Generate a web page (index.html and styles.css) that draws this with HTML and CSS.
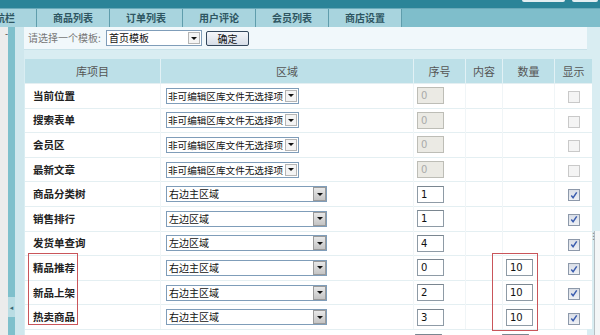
FILE: index.html
```html
<!DOCTYPE html>
<html lang="zh-CN">
<head>
  <meta charset="UTF-8" />
  <title>模板设置</title>
  <link rel="stylesheet" href="styles.css">
</head>
<body>
  <div class="topbar">
    <span class="topbtn wide"></span>
    <span class="topbtn"></span>
  </div>
  <div class="tabbar">
    <div class="tab first">导航栏</div>
    <div class="tab">商品列表</div>
    <div class="tab">订单列表</div>
    <div class="tab">用户评论</div>
    <div class="tab">会员列表</div>
    <div class="tab">商店设置</div>
  </div>
  <div class="main">
    <div class="side-gray"><span class="side-dot">-</span></div>
    <div class="side-bar"><span class="side-handle">◂</span></div>
    <div class="side-gap"></div>
    <div class="content">
      <div class="picker">
        <span class="picker-label">请选择一个模板:</span>
        <div class="sel sel-tpl"><span class="sel-text">首页模板</span><span class="sel-arrow"></span></div>
        <button class="btn">确定</button>
      </div>
      <div class="grid-wrap">
        <table class="lib">
          <thead>
            <tr>
              <th class="c-name">库项目</th>
              <th class="c-area">区域</th>
              <th class="c-seq">序号</th>
              <th class="c-body">内容</th>
              <th class="c-num">数量</th>
              <th class="c-show">显示</th>
            </tr>
          </thead>
          <tbody>
            <tr>
              <td class="c-name">当前位置</td>
              <td class="c-area"><div class="sel sel-fixed"><span class="sel-text">非可编辑区库文件无选择项</span><span class="sel-arrow"></span></div></td>
              <td class="c-seq"><input class="num" type="text" value="0" disabled></td>
              <td></td><td></td>
              <td class="c-show"><span class="check off"></span></td>
            </tr>
            <tr>
              <td class="c-name">搜索表单</td>
              <td class="c-area"><div class="sel sel-fixed"><span class="sel-text">非可编辑区库文件无选择项</span><span class="sel-arrow"></span></div></td>
              <td class="c-seq"><input class="num" type="text" value="0" disabled></td>
              <td></td><td></td>
              <td class="c-show"><span class="check off"></span></td>
            </tr>
            <tr>
              <td class="c-name">会员区</td>
              <td class="c-area"><div class="sel sel-fixed"><span class="sel-text">非可编辑区库文件无选择项</span><span class="sel-arrow"></span></div></td>
              <td class="c-seq"><input class="num" type="text" value="0" disabled></td>
              <td></td><td></td>
              <td class="c-show"><span class="check off"></span></td>
            </tr>
            <tr>
              <td class="c-name">最新文章</td>
              <td class="c-area"><div class="sel sel-fixed"><span class="sel-text">非可编辑区库文件无选择项</span><span class="sel-arrow"></span></div></td>
              <td class="c-seq"><input class="num" type="text" value="0" disabled></td>
              <td></td><td></td>
              <td class="c-show"><span class="check off"></span></td>
            </tr>
            <tr>
              <td class="c-name">商品分类树</td>
              <td class="c-area"><div class="sel sel-area"><span class="sel-text">右边主区域</span><span class="sel-arrow big"></span></div></td>
              <td class="c-seq"><input class="num" type="text" value="1"></td>
              <td></td><td></td>
              <td class="c-show"><span class="check on"><svg viewBox="0 0 11 11" width="11" height="11"><path d="M2.5 5.5 L4.5 8 L8.5 2" fill="none" stroke="#3a5cae" stroke-width="1.6"/></svg></span></td>
            </tr>
            <tr>
              <td class="c-name">销售排行</td>
              <td class="c-area"><div class="sel sel-area"><span class="sel-text">左边区域</span><span class="sel-arrow big"></span></div></td>
              <td class="c-seq"><input class="num" type="text" value="1"></td>
              <td></td><td></td>
              <td class="c-show"><span class="check on"><svg viewBox="0 0 11 11" width="11" height="11"><path d="M2.5 5.5 L4.5 8 L8.5 2" fill="none" stroke="#3a5cae" stroke-width="1.6"/></svg></span></td>
            </tr>
            <tr>
              <td class="c-name">发货单查询</td>
              <td class="c-area"><div class="sel sel-area"><span class="sel-text">左边区域</span><span class="sel-arrow big"></span></div></td>
              <td class="c-seq"><input class="num" type="text" value="4"></td>
              <td></td><td></td>
              <td class="c-show"><span class="check on"><svg viewBox="0 0 11 11" width="11" height="11"><path d="M2.5 5.5 L4.5 8 L8.5 2" fill="none" stroke="#3a5cae" stroke-width="1.6"/></svg></span></td>
            </tr>
            <tr>
              <td class="c-name">精品推荐</td>
              <td class="c-area"><div class="sel sel-area"><span class="sel-text">右边主区域</span><span class="sel-arrow big"></span></div></td>
              <td class="c-seq"><input class="num" type="text" value="0"></td>
              <td></td>
              <td class="c-num"><input class="num" type="text" value="10"></td>
              <td class="c-show"><span class="check on"><svg viewBox="0 0 11 11" width="11" height="11"><path d="M2.5 5.5 L4.5 8 L8.5 2" fill="none" stroke="#3a5cae" stroke-width="1.6"/></svg></span></td>
            </tr>
            <tr>
              <td class="c-name">新品上架</td>
              <td class="c-area"><div class="sel sel-area"><span class="sel-text">右边主区域</span><span class="sel-arrow big"></span></div></td>
              <td class="c-seq"><input class="num" type="text" value="2"></td>
              <td></td>
              <td class="c-num"><input class="num" type="text" value="10"></td>
              <td class="c-show"><span class="check on"><svg viewBox="0 0 11 11" width="11" height="11"><path d="M2.5 5.5 L4.5 8 L8.5 2" fill="none" stroke="#3a5cae" stroke-width="1.6"/></svg></span></td>
            </tr>
            <tr>
              <td class="c-name">热卖商品</td>
              <td class="c-area"><div class="sel sel-area"><span class="sel-text">右边主区域</span><span class="sel-arrow big"></span></div></td>
              <td class="c-seq"><input class="num" type="text" value="3"></td>
              <td></td>
              <td class="c-num"><input class="num" type="text" value="10"></td>
              <td class="c-show"><span class="check on"><svg viewBox="0 0 11 11" width="11" height="11"><path d="M2.5 5.5 L4.5 8 L8.5 2" fill="none" stroke="#3a5cae" stroke-width="1.6"/></svg></span></td>
            </tr>
          </tbody>
        </table>
        <div class="table-tail">
          <span class="tail-name"></span>
          <span class="tail-seq"><input class="num" type="text" value="5"></span>
          <span class="tail-num"><input class="num" type="text" value="10"></span>
        </div>
        <div class="mark mark-name"></div>
        <div class="mark mark-count"></div>
      </div>
    </div>
    <div class="side-right"><div class="frame-edge"><span class="grip">⋮</span></div></div>
  </div>
</body>
</html>
```

FILE: styles.css
```css
body {
  margin: 0;
  width: 600px;
  height: 335px;
  overflow: hidden;
  font-family: "Noto Sans CJK SC", "DejaVu Sans", sans-serif;
  font-size: 10px;
  color: #222;
  background-color: #d9edf2;
}

.topbar {
  height: 8px;
  background-color: #2b8498;
  display: flex;
  justify-content: flex-end;
  gap: 7px;
  padding-right: 2px;
}

.topbtn {
  width: 26px;
  height: 2px;
  background-color: #e4eef1;
  border-radius: 0 0 2px 2px;
}

.topbtn.wide {
  width: 43px;
}

.tabbar {
  height: 19px;
  display: flex;
  background-color: #7fbecb;
  border-top: 1px solid #6aaab9;
  box-sizing: border-box;
}

.tab {
  width: 72px;
  flex-shrink: 0;
  border-right: 1px solid #5f9dac;
  background-color: #a8d4de;
  color: #2e5662;
  font-weight: bold;
  text-align: center;
  line-height: 18px;
  font-size: 10px;
}

.tab.first {
  margin-left: -36px;
}

.main {
  display: flex;
  height: 308px;
  overflow: hidden;
}

.side-gray {
  width: 8px;
  background-color: #ececec;
}

.side-dot {
  display: block;
  margin-top: 3px;
  font-size: 9px;
  line-height: 8px;
  color: #333;
  text-align: right;
}

.side-bar {
  width: 7px;
  background-color: #7ec0cc;
  padding-top: 270px;
  box-sizing: border-box;
}

.side-handle {
  display: block;
  height: 20px;
  background-color: #b9dde4;
  color: #3d6a75;
  font-size: 7px;
  line-height: 20px;
  text-align: center;
}

.side-gap {
  width: 9px;
  background-color: #cfe7ed;
}

.content {
  width: 563px;
  display: flex;
  flex-direction: column;
}

.picker {
  height: 23px;
  flex-shrink: 0;
  background-color: #f1f8fb;
  border-bottom: 1px solid #c9e2e9;
  box-sizing: border-box;
  display: flex;
  align-items: center;
  padding-left: 4px;
}

.picker-label {
  color: #777;
  width: 78px;
  white-space: nowrap;
  line-height: 14px;
}

.sel {
  display: flex;
  align-items: center;
  height: 16px;
  border: 1px solid #7f9db9;
  background-color: #fff;
  box-sizing: border-box;
  color: #111;
  line-height: 14px;
  overflow: hidden;
}

.sel-text {
  flex: 1;
  padding-left: 2px;
  white-space: nowrap;
  overflow: hidden;
}

.sel-arrow {
  width: 12px;
  height: 12px;
  flex-shrink: 0;
  margin-right: 1px;
  border: 1px solid #b5b5b5;
  background-color: #f4f4f4;
  box-sizing: border-box;
  display: flex;
  align-items: center;
  justify-content: center;
}

.sel-arrow::after {
  content: "";
  border-left: 3px solid transparent;
  border-right: 3px solid transparent;
  border-top: 3px solid #111;
}

.sel-arrow.big {
  width: 13px;
  height: 14px;
  margin-right: 0;
  border-color: #9a9a9a;
  background: linear-gradient(#e8e8e8, #c4c4c4);
}

.sel-tpl {
  width: 96px;
}

.btn {
  margin-left: 4px;
  width: 43px;
  height: 15px;
  padding: 0;
  border: 1px solid #33475c;
  border-radius: 2px;
  background: linear-gradient(#f4f6fa, #d7dee8);
  font-family: inherit;
  font-size: 10px;
  line-height: 13px;
  color: #111;
}

.grid-wrap {
  position: relative;
  margin-top: 9px;
  margin-left: 1px;
}

.lib {
  width: 562px;
  border-collapse: collapse;
  table-layout: fixed;
  background-color: #fff;
}

.lib th {
  height: 24px;
  background-color: #bde0e8;
  color: #555;
  font-weight: normal;
  font-size: 11px;
  border-left: 1px solid #e2f1f5;
  padding: 0;
}

.lib th:first-child {
  border-left: none;
}

.lib td {
  height: 24.6px;
  padding: 0;
  border-top: 1px solid #e4eff2;
  border-left: 1px solid #f0f5f7;
  box-sizing: border-box;
  line-height: 14px;
}

.lib td:first-child {
  border-left: none;
}

.c-name { width: 135px; }
.c-area { width: 252px; }
.c-seq { width: 51px; }
.c-body { width: 36px; }
.c-num { width: 51px; }
.c-show { width: 37px; }

td.c-name {
  font-weight: bold;
  font-size: 10.5px;
  padding-left: 8px;
  color: #222;
}

td.c-area {
  padding-left: 5px;
}

.sel-fixed {
  width: 133px;
}

.sel-fixed .sel-text {
  font-size: 9.6px;
  padding-left: 1px;
}

.sel-area {
  width: 161px;
}

td.c-seq,
td.c-num {
  padding-left: 3px;
}

.num {
  display: block;
  width: 27px;
  height: 17px;
  box-sizing: border-box;
  border: 1px solid #8e9ba6;
  border-top-color: #7a8690;
  padding: 0 3px;
  font-family: "DejaVu Sans", sans-serif;
  font-size: 10px;
  color: #111;
  background-color: #fff;
}

.num:disabled {
  background-color: #ebeae4;
  border-color: #bdbdb6;
  color: #aaa;
}

td.c-show {
  text-align: center;
}

.check {
  display: inline-flex;
  align-items: center;
  justify-content: center;
  width: 12px;
  height: 12px;
  box-sizing: border-box;
  vertical-align: middle;
  border: 1px solid #8d99aa;
  background: linear-gradient(#d9dee7, #eef0f4);
}

.check.off {
  border-color: #c9c9c9;
  background: #f4f4f4;
}

.table-tail {
  display: flex;
  width: 562px;
  height: 20px;
  padding-top: 4px;
  background-color: #fff;
  border-top: 1px solid #e4eff2;
}

.tail-name {
  width: 390px;
}

.tail-seq {
  width: 87px;
}

.mark {
  position: absolute;
  border: 1px solid #c9555a;
  box-sizing: border-box;
}

.mark-name {
  left: 3px;
  top: 194px;
  width: 50px;
  height: 72px;
}

.mark-count {
  left: 467px;
  top: 194px;
  width: 46px;
  height: 78px;
}

.side-right {
  width: 13px;
  background-color: #d9edf2;
}

.frame-edge {
  margin-top: 46px;
  margin-left: 7px;
  height: 100%;
  border-left: 1px solid #b8c0c4;
  background-color: #f3f6f7;
}

.grip {
  display: block;
  margin-top: 204px;
  margin-left: -6px;
  font-size: 9px;
  color: #777;
  line-height: 10px;
}
```
